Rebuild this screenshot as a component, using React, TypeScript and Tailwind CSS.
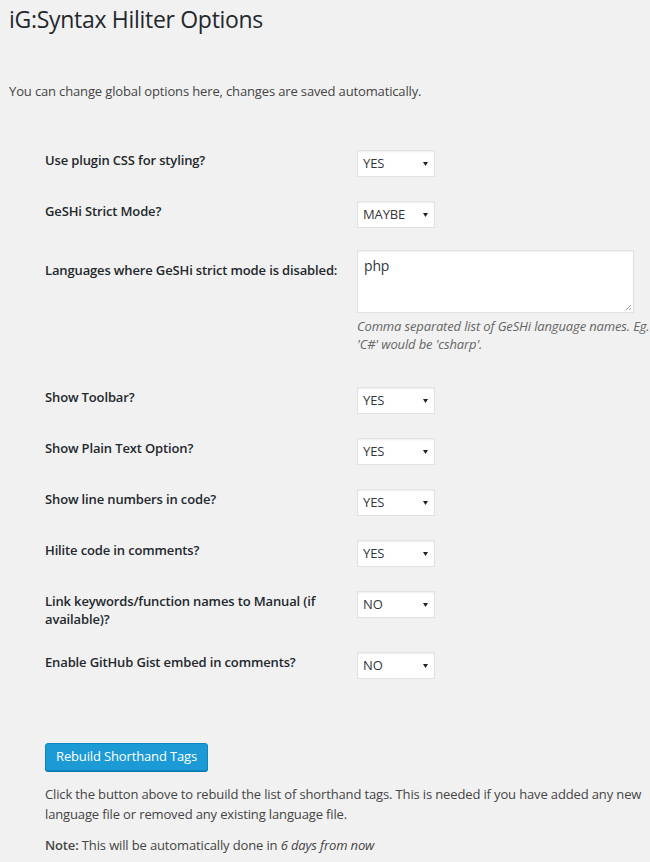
import React from "react";

type Row = {
  label: string;
  value: string;
};

const topRows: Row[] = [
  { label: "Use plugin CSS for styling?", value: "YES" },
  { label: "GeSHi Strict Mode?", value: "MAYBE" },
];

const bottomRows: Row[] = [
  { label: "Show Toolbar?", value: "YES" },
  { label: "Show Plain Text Option?", value: "YES" },
  { label: "Show line numbers in code?", value: "YES" },
  { label: "Hilite code in comments?", value: "YES" },
  { label: "Link keywords/function names to Manual (if available)?", value: "NO" },
  { label: "Enable GitHub Gist embed in comments?", value: "NO" },
];

function FakeSelect({ value }: { value: string }) {
  return (
    <div className="flex h-[27px] w-[78px] items-center justify-between border border-[#e2e2e2] bg-white pl-[5px] pr-[6px] text-[13px] text-[#32373c] shadow-[inset_0_1px_2px_rgba(0,0,0,0.07)]">
      <span>{value}</span>
      <svg width="5" height="4" viewBox="0 0 5 4">
        <path d="M0 0h5L2.5 4z" fill="#222" />
      </svg>
    </div>
  );
}

function SettingRow({ label, value }: Row) {
  return (
    <div className="flex py-[12px]">
      <div className="w-[312px] shrink-0 pr-[10px] pt-[1px] text-[13px] font-semibold leading-[18px] text-[#23282d]">
        {label}
      </div>
      <FakeSelect value={value} />
    </div>
  );
}

export default function App() {
  return (
    <div
      className="min-h-[862px] w-[650px] overflow-hidden bg-[#f1f1f1] pl-[9px] tracking-[-0.14px] text-[#444]"
      style={{ fontFamily: '"Open Sans", "Liberation Sans", sans-serif' }}
    >
      <h1 className="pt-[5px] text-[23px] font-normal leading-[29px] tracking-[-0.3px] text-[#23282d]">
        iG:Syntax Hiliter Options
      </h1>
      <p className="mt-[47px] text-[13px] leading-[20px]">
        You can change global options here, changes are saved automatically.
      </p>

      <div className="mt-[37px] pl-[36px]">
        {topRows.map((r) => (
          <SettingRow key={r.label} {...r} />
        ))}

        {/* textarea row */}
        <div className="flex pt-[10px] pb-[22px]">
          <div className="w-[312px] shrink-0 pr-[6px] pt-[11px] text-[13px] font-semibold leading-[18px] text-[#23282d]">
            Languages where GeSHi strict mode is disabled:
          </div>
          <div>
            <div className="relative h-[63px] w-[277px] border border-[#e2e2e2] bg-white px-[6px] pt-[4px] text-[14px] text-[#32373c] shadow-[inset_0_1px_2px_rgba(0,0,0,0.07)]">
              php
              <svg
                className="absolute bottom-[1px] right-[1px]"
                width="7"
                height="7"
                viewBox="0 0 7 7"
              >
                <path d="M6 1L1 6M6 4L4 6" stroke="#999" strokeWidth="1" />
              </svg>
            </div>
            <p className="mt-[4px] whitespace-nowrap text-[13px] italic leading-[18px] text-[#666]">
              Comma separated list of GeSHi language names. Eg.
              <br />
              'C#' would be 'csharp'.
            </p>
          </div>
        </div>

        {bottomRows.map((r) => (
          <SettingRow key={r.label} {...r} />
        ))}

        <div className="mt-[52px]">
          <button className="h-[28px] rounded-[3px] border border-[#0c86c0] bg-[#1c9ad6] px-[10px] text-[13px] text-white shadow-[0_1px_0_#0a78ad]">
            Rebuild Shorthand Tags
          </button>
          <p className="mt-[13px] text-[13px] leading-[20px]">
            Click the button above to rebuild the list of shorthand tags. This is
            needed if you have added any new language file or removed any
            existing language file.
          </p>
          <p className="mt-[11px] text-[13px] leading-[20px]">
            <span className="font-semibold">Note:</span> This will be
            automatically done in <em>6 days from now</em>
          </p>
        </div>
      </div>
    </div>
  );
}
